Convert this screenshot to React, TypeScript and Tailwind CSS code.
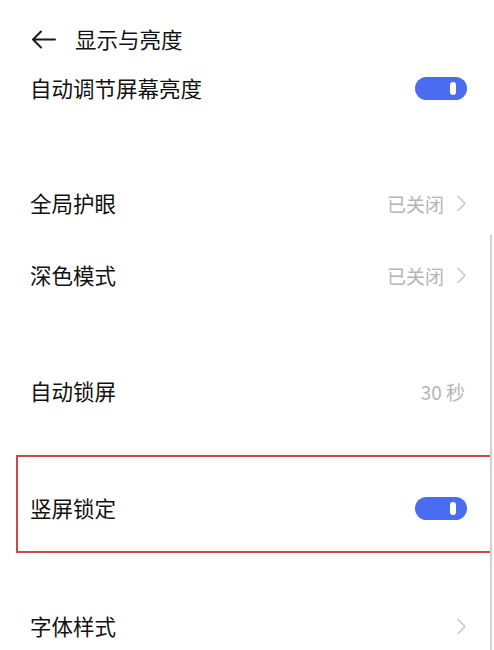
import React from "react";

const font = { fontFamily: '"Noto Sans CJK SC", "Noto Sans", sans-serif' };

const Toggle = () => (
  <div className="w-[52px] h-[23px] rounded-full bg-[#4a6cf0] flex items-center justify-end pr-[11px]">
    <div className="w-[6px] h-[13px] rounded-full bg-white" />
  </div>
);

const Chevron = () => (
  <svg width="11" height="17" viewBox="0 0 11 17" fill="none">
    <path d="M2 1.5 L9 8.5 L2 15.5" stroke="#c4c4c4" strokeWidth="1.4" strokeLinejoin="round" strokeLinecap="round" />
  </svg>
);

const Row = ({ label, value, chevron, toggle, h = "h-[72px]" }: { label: string; value?: string; chevron?: boolean; toggle?: boolean; h?: string }) => (
  <div className={`${h} flex items-center justify-between pl-[30px] pr-[27px]`}>
    <span className="text-[21.5px] text-[#111] leading-none">{label}</span>
    <div className="flex items-center gap-[12px]">
      {value && <span className="text-[19px] text-[#b5b5b5] leading-none">{value}</span>}
      {chevron && <Chevron />}
      {toggle && <Toggle />}
    </div>
  </div>
);

const App = () => {
  return (
    <div className="relative w-[494px] h-[650px] bg-white overflow-hidden" style={font}>
      {/* Header */}
      <div className="h-[64px] flex items-center pt-[14px] pl-[31px] gap-[19px]">
        <svg width="25" height="19" viewBox="0 0 25 19" fill="none">
          <path d="M10 1.5 L2 9.5 L10 17.5 M2 9.5 L24 9.5" stroke="#1a1a1a" strokeWidth="2" strokeLinecap="round" strokeLinejoin="round" />
        </svg>
        <span className="text-[21.5px] text-[#111] leading-none">显示与亮度</span>
      </div>

      <Row label="自动调节屏幕亮度" toggle h="h-[48px]" />
      <div className="h-[55px]" />
      <Row label="全局护眼" value="已关闭" chevron />
      <Row label="深色模式" value="已关闭" chevron />
      <div className="h-[44px]" />
      <div className="h-[72px] flex items-center justify-between pl-[30px] pr-[29px]">
        <span className="text-[21.5px] text-[#111] leading-none">自动锁屏</span>
        <span className="text-[19px] text-[#b5b5b5] leading-none">30&nbsp;秒</span>
      </div>
      <div className="h-[28px]" />

      {/* Highlighted row */}
      <div className="ml-[16px] mr-[2px] h-[98px] border-2 border-[#cc4a47]">
        <div className="h-full flex items-center justify-between pl-[12px] pr-[23px] pt-[8px]">
          <span className="text-[21.5px] text-[#111] leading-none">竖屏锁定</span>
          <Toggle />
        </div>
      </div>

      <div className="h-[37px]" />
      <Row label="字体样式" chevron />

      {/* Scroll indicator */}
      <div className="absolute right-[2px] top-[235px] bottom-0 w-[2px] bg-[#d2d2d2]" />
    </div>
  );
};

export default App;
